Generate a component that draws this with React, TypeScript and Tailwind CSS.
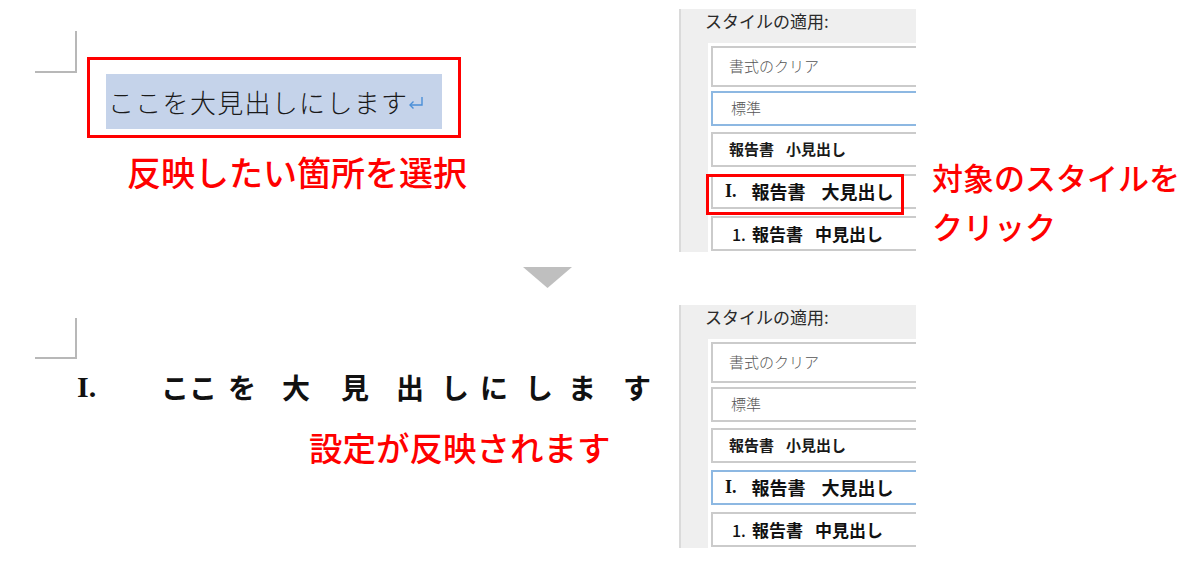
import React from "react";

const JP = "font-['Noto_Sans_CJK_JP',sans-serif]";

function Item({
  h,
  mt,
  blue,
  children,
  pl,
}: {
  h: string;
  mt: string;
  blue?: boolean;
  children: React.ReactNode;
  pl: string;
}) {
  return (
    <div
      className={`${h} ${mt} ${pl} w-[230px] flex items-center border-2 ${
        blue ? "border-[#8db8e2]" : "border-[#cbcbcb]"
      } bg-white whitespace-nowrap`}
    >
      {children}
    </div>
  );
}

function StylePanel({ blueIndex, redBox }: { blueIndex: number; redBox?: boolean }) {
  return (
    <div className="relative w-[237px] h-[243px] flex-none bg-[#efefef] border-l-2 border-[#dadada] overflow-hidden">
      <div className="h-[34px] pl-[24px] text-[17px] leading-[24px] text-[#2a2a2a] whitespace-nowrap">
        スタイルの適用:
      </div>
      <div className="ml-[27px] h-[209px] bg-white pl-[3px] pt-[3px] flex flex-col">
        <Item h="h-[41px]" mt="mt-0" pl="pl-[16px]" blue={blueIndex === 0}>
          <span className="text-[15px] text-[#555] font-light">書式のクリア</span>
        </Item>
        <Item h="h-[35px]" mt="mt-[4px]" pl="pl-[18px]" blue={blueIndex === 1}>
          <span className="text-[15px] text-[#555] font-light">標準</span>
        </Item>
        <Item h="h-[35px]" mt="mt-[6px]" pl="pl-[16px]" blue={blueIndex === 2}>
          <span className="text-[15px] text-[#1a1a1a] font-semibold">報告書</span>
          <span className="ml-[12px] text-[15px] text-[#1a1a1a] font-semibold">小見出し</span>
        </Item>
        <Item h="h-[35px]" mt="mt-[7px]" pl="pl-[12px]" blue={blueIndex === 3}>
          <span className="font-['Liberation_Serif',serif] font-bold text-[18px] text-[#111]">I.</span>
          <span className="ml-[15px] text-[18px] text-[#111] font-bold">報告書</span>
          <span className="ml-[16px] text-[18px] text-[#111] font-bold">大見出し</span>
        </Item>
        <Item h="h-[35px]" mt="mt-[7px]" pl="pl-[19px]" blue={blueIndex === 4}>
          <span className="text-[16px] text-[#111] font-medium">1.</span>
          <span className="ml-[6px] text-[17px] text-[#111] font-semibold">報告書</span>
          <span className="ml-[12px] text-[17px] text-[#111] font-semibold">中見出し</span>
        </Item>
      </div>
      {redBox && (
        <div className="absolute left-[25px] top-[165px] w-[198px] h-[41px] border-[3px] border-[#ff0000]" />
      )}
    </div>
  );
}

const headingChars: [string, number][] = [
  ["こ", 28],
  ["こ", 39],
  ["を", 54],
  ["大", 59],
  ["見", 55],
  ["出", 45],
  ["し", 39],
  ["に", 45],
  ["し", 43],
  ["ま", 55],
  ["す", 30],
];

export default function App() {
  return (
    <div className={`w-[1200px] h-[566px] bg-white overflow-hidden ${JP}`}>
      {/* top row */}
      <div className="flex h-[262px]">
        <div className="w-[679px] flex-none flex flex-col">
          <div className="flex items-start">
            <div className="ml-[35px] mt-[31px] w-[42px] h-[42px] border-r-2 border-b-2 border-[#b8b8b8]" />
            <div className="ml-[10px] mt-[57px] w-[374px] h-[81px] border-[3px] border-[#ff0000] pl-[16px] pt-[14px]">
              <div className="w-[336px] h-[55px] bg-[#c5d3ea] flex items-center pl-[2px]">
                <span className="text-[26px] leading-none tracking-[1.3px] font-light text-[#1a1a1a] whitespace-nowrap">
                  ここを大見出しにします
                </span>
                <svg width="16" height="13" viewBox="0 0 16 13" className="mt-[2px]">
                  <path d="M14 1 V9 H2" stroke="#4a8fd8" strokeWidth="1.4" fill="none" />
                  <path d="M5.5 5.5 L2 9 L5.5 12.5" stroke="#4a8fd8" strokeWidth="1.4" fill="none" />
                </svg>
              </div>
            </div>
          </div>
          <div className="mt-[17px] pl-[127px] text-[34px] leading-none font-medium text-[#ff0000] whitespace-nowrap">
            反映したい箇所を選択
          </div>
        </div>
        <div className="mt-[9px]">
          <StylePanel blueIndex={1} redBox />
        </div>
        <div className="ml-[16px] mt-[152px] text-[31px] leading-[49px] font-medium text-[#ff0000] whitespace-nowrap">
          <div>対象のスタイルを</div>
          <div>クリック</div>
        </div>
      </div>

      {/* arrow */}
      <div className="h-[43px] pt-[5px] pl-[523px]">
        <svg width="49" height="21" viewBox="0 0 49 21">
          <polygon points="0,0 49,0 24.5,21" fill="#bfbfbf" />
        </svg>
      </div>

      {/* bottom row */}
      <div className="flex h-[261px]">
        <div className="w-[679px] flex-none flex flex-col">
          <div className="ml-[35px] mt-[13px] w-[42px] h-[41px] border-r-2 border-b-2 border-[#b8b8b8]" />
          <div className="mt-[13px] h-[30px] flex items-center whitespace-nowrap">
            <span className="ml-[77px] w-[84px] font-['Liberation_Serif',serif] font-bold text-[30px] leading-[30px] text-[#111]">
              I.
            </span>
            {headingChars.map(([c, w], i) => (
              <span
                key={i}
                className="inline-block text-[28px] leading-[30px] font-bold text-[#111]"
                style={{ width: w }}
              >
                {c}
              </span>
            ))}
          </div>
          <div className="mt-[28px] pl-[309px] text-[33.5px] leading-none font-medium text-[#ff0000] whitespace-nowrap">
            設定が反映されます
          </div>
        </div>
        <div>
          <StylePanel blueIndex={3} />
        </div>
      </div>
    </div>
  );
}
